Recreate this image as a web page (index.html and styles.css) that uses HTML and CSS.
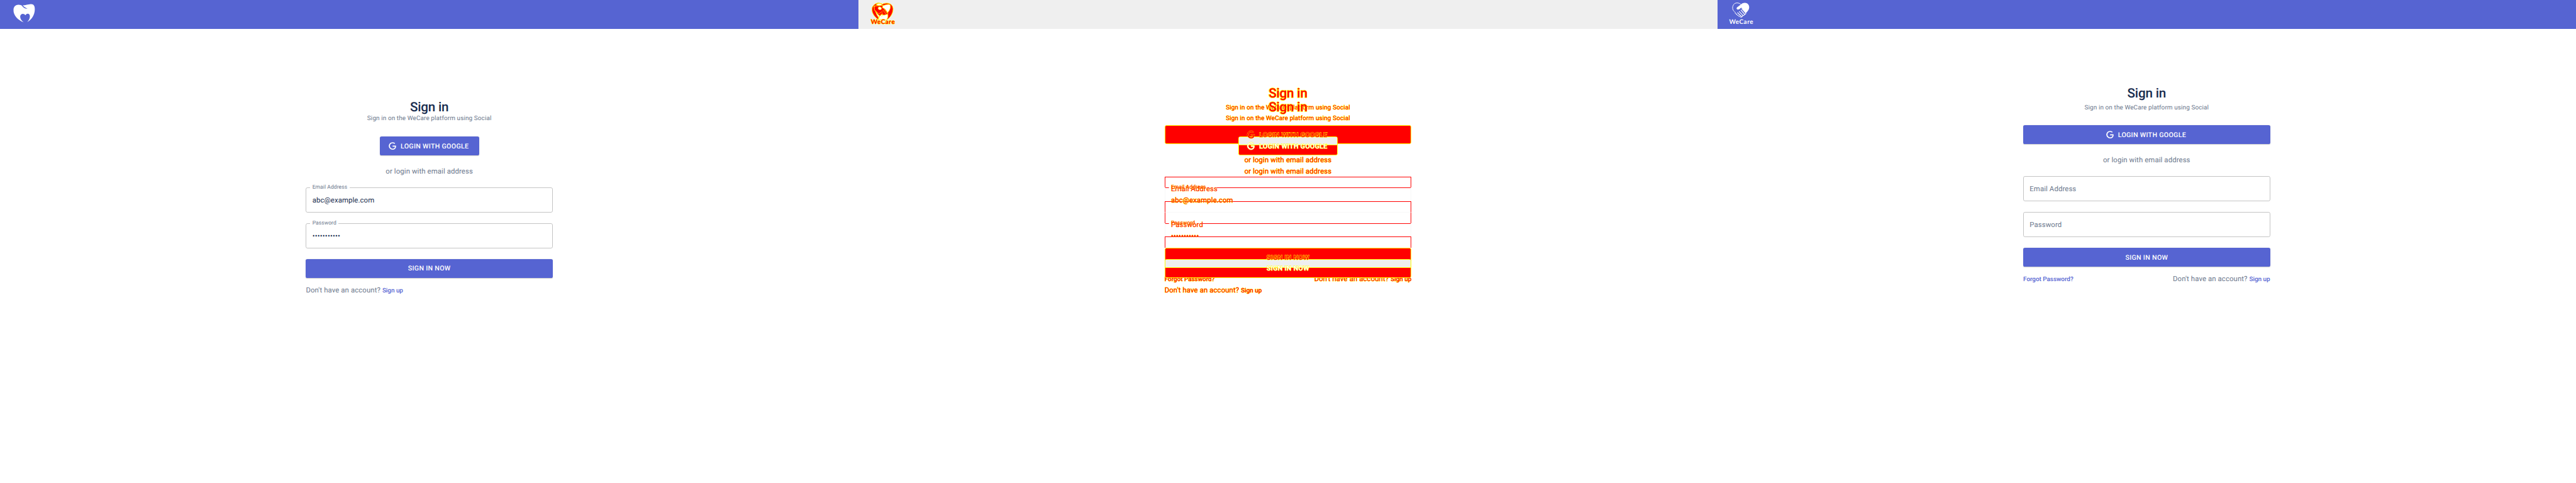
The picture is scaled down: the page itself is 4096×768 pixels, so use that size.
FILE: index.html
```
<!DOCTYPE html>
<html lang="en">
<head>
<meta charset="utf-8">
<title>Sign in</title>
<link rel="stylesheet" href="styles.css">
</head>
<body>
<svg class="defs" width="0" height="0" aria-hidden="true">
  <symbol id="google" viewBox="0 0 24 24"><path d="M21.35 11.1H12.18V13.83H18.69C18.36 17.64 15.19 19.27 12.19 19.27C8.36 19.27 5 16.25 5 12C5 7.9 8.2 4.73 12.2 4.73C15.29 4.73 17.1 6.7 17.1 6.7L19 4.72C19 4.72 16.56 2 12.1 2C6.42 2 2.03 6.8 2.03 12C2.03 17.05 6.16 22 12.25 22C17.6 22 21.5 18.33 21.5 12.91C21.5 11.76 21.35 11.1 21.35 11.1Z"/></symbol>
</svg>
<div class="board">
  <section class="panel">
    <header class="bar">
      <svg class="tooth" viewBox="87 27 148 128">
        <path fill="#fff" d="M89 68C89 45 105 33 122 33C133 33 143 36 149 42L151 37C170 37 187 30 206 29C225 29 233 43 232 66C231 100 213 134 180 150C191 140 200 125 199 109C198 92 179 87 169 104C158 88 137 92 134 110C133 128 145 142 159 152C120 138 87 105 89 68Z"/>
        <path fill="#5664d2" d="M146 40L151 36C160 48 170 54 183 58C167 62 155 55 146 40Z"/>
      </svg>
    </header>
    <main class="stage">
      <form class="form form-a">
        <h1 class="title">Sign in</h1>
        <p class="sub">Sign in on the WeCare platform using Social</p>
        <div class="btn social"><svg class="g"><use href="#google"/></svg><span>LOGIN WITH GOOGLE</span></div>
        <p class="or">or login with email address</p>
        <div class="field"><span class="label">Email Address</span><span class="value">abc@example.com</span></div>
        <div class="field"><span class="label">Password</span><span class="value dots">•••••••••••</span></div>
        <div class="btn submit"><span>SIGN IN NOW</span></div>
        <div class="foot"><p>Don't have an account? <a class="link">Sign up</a></p></div>
      </form>
    </main>
  </section>

  <section class="panel diff">
    <header class="bar">
      <svg class="mark" viewBox="105 12 170 152">
        <path class="hot" d="M190 28C176 16 140 13 122 48C113 78 131 108 163 132L164 116C150 96 139 76 148 54L190 90L163 116C175 98 198 96 206 110L220 132C247 114 263 82 261 55C257 15 206 15 190 28Z"/>
        <path class="hot" d="M134 40L190 34L212 62L228 92L208 112L182 114L160 96L136 66Z"/>
        <path fill="#fff" stroke="#ff0" stroke-width="4" d="M192 38C208 33 235 23 242 34C246 56 235 72 225 84L207 60L190 50ZM164 130C166 110 178 98 190 96C202 110 216 89 226 98C229 114 221 130 215 132Z"/>
        <path fill="#fff" stroke="#ff0" stroke-width="4" d="M161 52C167 41 184 47 184 58C176 70 160 64 161 52ZM148 30C156 21 179 20 187 30C177 40 155 37 148 30Z"/>
        <path fill="none" stroke="#ff0" stroke-width="3" d="M132 46L144 38M138 68L166 92L190 76M178 100L194 84M184 112L194 96M202 62L222 88M192 66L214 93"/>
        <text x="112" y="158">WeCare</text>
      </svg>
    </header>
    <main class="stage">
      <form class="form form-b">
        <h1 class="title">Sign in</h1>
        <p class="sub">Sign in on the WeCare platform using Social</p>
        <div class="btn social"><svg class="g"><use href="#google"/></svg><span>LOGIN WITH GOOGLE</span></div>
        <p class="or">or login with email address</p>
        <div class="field"><span class="hint">Email Address</span></div>
        <div class="field"><span class="hint">Password</span></div>
        <div class="btn submit"><span>SIGN IN NOW</span></div>
        <div class="foot"><a class="link">Forgot Password?</a><p>Don't have an account? <a class="link">Sign up</a></p></div>
      </form>
      <div class="lines">
        <i class="strip"></i><i class="strip shared notch-l"></i><i class="strip"></i>
        <i class="strip pale"></i><i class="strip shared notch-s"></i><i class="strip"></i>
      </div>
      <form class="form form-a">
        <h1 class="title">Sign in</h1>
        <p class="sub">Sign in on the WeCare platform using Social</p>
        <div class="btn social"><svg class="g"><use href="#google"/></svg><span>LOGIN WITH GOOGLE</span></div>
        <p class="or">or login with email address</p>
        <div class="field"><span class="label">Email Address</span><span class="value">abc@example.com</span></div>
        <div class="field"><span class="label">Password</span><span class="value dots">•••••••••••</span></div>
        <div class="btn submit"><span>SIGN IN NOW</span></div>
        <div class="foot"><p>Don't have an account? <a class="link">Sign up</a></p></div>
      </form>
    </main>
  </section>

  <section class="panel">
    <header class="bar">
      <svg class="mark" viewBox="105 12 170 152">
        <path fill="none" stroke="#fff" stroke-width="4" d="M189 29C176 15 150 15 140 32C130 49 134 66 146 77L153 84C149 92 157 95 162 92C159 101 168 104 172 101C171 110 180 112 183 108C184 118 196 118 199 110"/>
        <path fill="#fff" d="M188 31C203 13 235 13 244 37C249 57 241 70 223 87L196 53C192 51 189 52 186 55C180 62 170 66 163 61C159 57 161 52 165 48Z"/>
        <path fill="none" stroke="#fff" stroke-width="5" stroke-linecap="round" d="M197 58L222 86C225 92 219 98 213 93L191 67M213 93C215 101 208 106 202 101L179 77M202 101C203 109 196 113 191 108L168 84"/>
        <text x="111" y="161">WeCare</text>
      </svg>
    </header>
    <main class="stage">
      <form class="form form-b">
        <h1 class="title">Sign in</h1>
        <p class="sub">Sign in on the WeCare platform using Social</p>
        <div class="btn social"><svg class="g"><use href="#google"/></svg><span>LOGIN WITH GOOGLE</span></div>
        <p class="or">or login with email address</p>
        <div class="field"><span class="hint">Email Address</span></div>
        <div class="field"><span class="hint">Password</span></div>
        <div class="btn submit"><span>SIGN IN NOW</span></div>
        <div class="foot"><a class="link">Forgot Password?</a><p>Don't have an account? <a class="link">Sign up</a></p></div>
      </form>
    </main>
  </section>
</div>
</body>
</html>
```

FILE: styles.css
```
* { box-sizing: border-box; }
html { overflow: hidden; background: #fff; }
body { margin: 0; overflow: hidden; font-family: Roboto, "Liberation Sans", sans-serif; color: #172b4d; text-rendering: geometricPrecision; }
h1, p { margin: 0; }
.defs { position: absolute; }

.board { zoom: 0.711111; width: 5760px; height: 1080px; display: grid; grid-template-columns: repeat(3, 1920px); }
.panel { display: flex; flex-direction: column; }
.bar { height: 64px; background: #5664d2; display: flex; align-items: flex-start; }
.tooth { width: 49.3px; height: 42.7px; margin: 9px 0 0 29px; }
.mark { width: 56.7px; height: 50.7px; margin: 4px 0 0 25px; }
.mark text { font: 700 42px Lato, sans-serif; fill: #fff; letter-spacing: 2px; }

.stage { flex: 1; display: grid; justify-content: center; align-items: start; grid-template-columns: 552px; }
.form { grid-area: 1 / 1; display: flex; flex-direction: column; }
.form-a { padding-top: 160.5px; }
.form-b { padding-top: 130.5px; }
.title { font-size: 29px; font-weight: 500; line-height: 32px; letter-spacing: -0.24px; text-align: center; }
.sub { font-size: 14px; line-height: 20px; letter-spacing: 0.15px; color: #6b778c; text-align: center; margin-bottom: 29px; }
.form-b .sub { margin-top: 5px; }
.or { font-size: 16px; line-height: 24px; letter-spacing: 0.15px; color: #6b778c; text-align: center; margin: 24px 0 24px; }

.btn { height: 42px; border-radius: 4px; background: #5664d2; color: #fff; display: flex; align-items: center; justify-content: center; font-size: 15px; font-weight: 500; letter-spacing: 0.43px; white-space: nowrap; box-shadow: 0 1px 2px rgba(0, 0, 0, 0.2); }
.form-a .social { width: 222px; align-self: center; }
.g { width: 20px; height: 20px; margin: 0 8px 0 -4px; fill: currentColor; overflow: visible; }

.field { position: relative; height: 56px; margin-bottom: 24px; border: 1px solid #c4c4c4; border-radius: 4px; padding: 0 13px; display: flex; align-items: center; font-size: 16px; line-height: 24px; letter-spacing: 0.15px; }
.dots { letter-spacing: 0.3px; }
.hint { color: #6b778c; }
.label { position: absolute; left: 8px; top: -9px; padding: 0 5px; background: #fff; color: #6b778c; font-size: 12px; line-height: 16px; letter-spacing: 0.11px; }
.foot { display: flex; justify-content: space-between; align-items: baseline; margin-top: 16px; font-size: 16px; line-height: 24px; letter-spacing: 0.15px; color: #6b778c; }
.link { font-size: 14px; font-weight: 500; letter-spacing: -0.05px; color: #5664d2; }

/* change map: both forms stacked, changed areas in red with yellow edges */
.diff .bar { background: #efefef; }
.diff .hot { fill: #f00; stroke: #ff0; stroke-width: 4; }
.diff .mark text { fill: #f00; stroke: #ff0; stroke-width: 5; paint-order: stroke; }
.diff .form, .diff .form .hint, .diff .form .label, .diff .sub, .diff .or, .diff .foot, .diff .link { color: #f00; -webkit-text-stroke: 1.1px #ff0; paint-order: stroke fill; }
.diff .form .label, .diff .form .hint { -webkit-text-stroke-width: 0.6px; }
.diff .title { -webkit-text-stroke: 2.2px #ff0; }
.diff .field { border-color: transparent; }
.diff .label { background: none; }
.diff .btn { position: relative; background: #f00; border: 1.5px solid #ff0; box-shadow: none; }
.diff .btn > * { position: relative; z-index: 2; paint-order: stroke fill; }
.diff .form-b .btn { color: #f00; -webkit-text-stroke: 1.3px #ff0; }
.diff .form-a .btn { color: #fff; -webkit-text-stroke: 1.3px #ff0; }
.diff .g { stroke: #ff0; stroke-width: 1.6px; }
.diff .form-a .btn::before { content: ""; position: absolute; left: 0; right: 0; top: 0; height: 17px; background: #efefef; border-bottom: 1.5px solid #ff0; }
.lines { grid-area: 1 / 1; padding-top: 330.5px; display: flex; flex-direction: column; }
.strip { height: 25px; border: 1.4px solid #f00; border-bottom: 0; }
.strip.shared { height: 30px; border-left-color: #f7f7f7; border-right-color: #f7f7f7; }
.strip.pale { border-top-color: #f7f7f7; }
.notch-l, .notch-s { border-top: 0; background: linear-gradient(#f00, #f00) 0 0 / 8px 1.4px no-repeat, linear-gradient(#f00, #f00) 100% 0 / 434px 1.4px no-repeat; }
.strip.notch-l { border-top: 0; }
.strip.notch-s { border-top: 0; background-size: 8px 1.4px, 466px 1.4px; }
```
